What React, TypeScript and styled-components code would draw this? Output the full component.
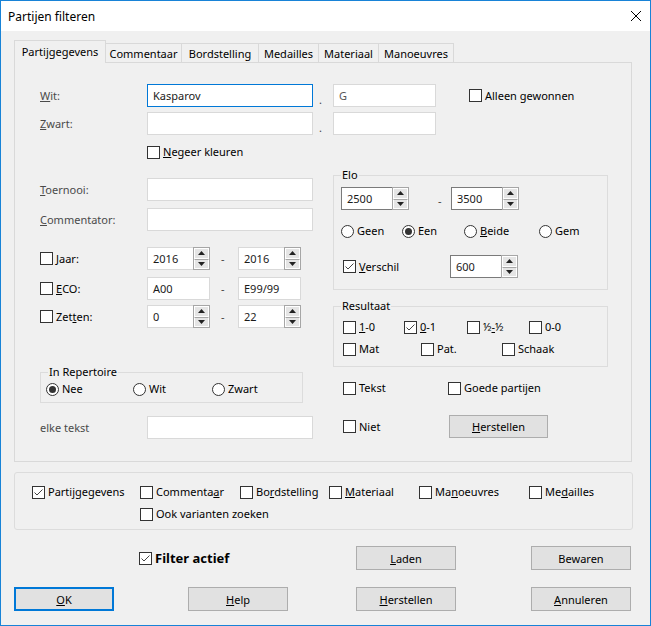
import React from "react";
import styled, { createGlobalStyle } from "styled-components";

const GlobalStyle = createGlobalStyle`
  html, body { margin: 0; padding: 0; background: #fff; }
  body { font-family: "Noto Sans", sans-serif; font-size: 11px; color: #000; }
  * { box-sizing: border-box; }
`;

function Check({ on }: { on?: boolean }) {
  return (
    <Box>
      {on && (
        <svg width="11" height="11" viewBox="0 0 11 11">
          <path d="M1.5 5.5 L4 8 L9.5 2.5" fill="none" stroke="#444" strokeWidth="1" />
        </svg>
      )}
    </Box>
  );
}

function CheckItem({ on, w, ml, children }: { on?: boolean; w?: number; ml?: number; children: React.ReactNode }) {
  return (
    <Item $w={w} $ml={ml}>
      <Check on={on} />
      <span>{children}</span>
    </Item>
  );
}

function RadioItem({ on, w, children }: { on?: boolean; w?: number; children: React.ReactNode }) {
  return (
    <Item $w={w}>
      <Circle>{on && <Dot />}</Circle>
      <span>{children}</span>
    </Item>
  );
}

function Arrow({ up }: { up?: boolean }) {
  return (
    <svg width="7" height="4" viewBox="0 0 7 4">
      <path d={up ? "M0 4 L3.5 0 L7 4 Z" : "M0 0 L7 0 L3.5 4 Z"} fill="#222" />
    </svg>
  );
}

function Spinner({ w, dark, value }: { w: number; dark?: boolean; value: string }) {
  return (
    <SpinFrame $w={w} $dark={dark}>
      <SpinText>{value}</SpinText>
      <SpinCol>
        <SpinBtn>
          <Arrow up />
        </SpinBtn>
        <SpinBtn>
          <Arrow />
        </SpinBtn>
      </SpinCol>
    </SpinFrame>
  );
}

export default function App() {
  return (
    <>
      <GlobalStyle />
      <Window>
        <TitleBar>
          <Title>Partijen filteren</Title>
          <svg width="10" height="10" viewBox="0 0 10 10" style={{ marginRight: 9 }}>
            <path d="M0 0 L10 10 M10 0 L0 10" stroke="#000" strokeWidth="1" />
          </svg>
        </TitleBar>

        <TabStrip>
          <Tab $w={92} $active>Partijgegevens</Tab>
          <Tab $w={77}>Commentaar</Tab>
          <Tab $w={78}>Bordstelling</Tab>
          <Tab $w={61}>Medailles</Tab>
          <Tab $w={61}>Materiaal</Tab>
          <Tab $w={76}>Manoeuvres</Tab>
        </TabStrip>

        <Panel>
          <Row>
            <Label $muted>
              <u>W</u>it:
            </Label>
            <TextBox $w={166} $focus>Kasparov</TextBox>
            <Sep>.</Sep>
            <TextBox $w={103} $color="#555">G</TextBox>
            <CheckItem ml={33}>Alleen gewonnen</CheckItem>
          </Row>
          <Row $mt={5}>
            <Label $muted>
              <u>Z</u>wart:
            </Label>
            <TextBox $w={166} />
            <Sep>.</Sep>
            <TextBox $w={103} />
          </Row>
          <Row $mt={10} $pl={107}>
            <CheckItem>
              <u>N</u>egeer kleuren
            </CheckItem>
          </Row>

          <Columns>
            <LeftCol>
              <Row>
                <Label $muted>
                  <u>T</u>oernooi:
                </Label>
                <TextBox $w={166} />
              </Row>
              <Row $mt={7}>
                <Label $muted>
                  <u>C</u>ommentator:
                </Label>
                <TextBox $w={166} />
              </Row>
              <Row $mt={16}>
                <CheckItem w={107}>
                  <u>J</u>aar:
                </CheckItem>
                <Spinner w={63} value="2016" />
                <Dash $w={28} $pl={11}>-</Dash>
                <Spinner w={63} value="2016" />
              </Row>
              <Row $mt={7}>
                <CheckItem w={107}>
                  <u>E</u>CO:
                </CheckItem>
                <TextBox $w={63}>A00</TextBox>
                <Dash $w={28} $pl={11}>-</Dash>
                <TextBox $w={63}>E99/99</TextBox>
              </Row>
              <Row $mt={5}>
                <CheckItem w={107}>
                  Zet<u>t</u>en:
                </CheckItem>
                <Spinner w={63} value="0" />
                <Dash $w={28} $pl={11}>-</Dash>
                <Spinner w={63} value="22" />
              </Row>

              <Group $w={263} $mt={37} $pb={6}>
                <Legend>In Repertoire</Legend>
                <Row $mt={3} $pl={5}>
                  <RadioItem on w={87}>Nee</RadioItem>
                  <RadioItem w={79}>Wit</RadioItem>
                  <RadioItem>Zwart</RadioItem>
                </Row>
              </Group>

              <Row $mt={13}>
                <Label $muted>elke tekst</Label>
                <TextBox $w={166} />
              </Row>
            </LeftCol>

            <RightCol>
              <Group $w={275} $pb={11}>
                <Legend>Elo</Legend>
                <Row $mt={5} $pl={7}>
                  <Spinner w={68} dark value="2500" />
                  <Dash $w={42} $pl={29} $low>-</Dash>
                  <Spinner w={68} dark value="3500" />
                </Row>
                <Row $mt={14} $pl={7}>
                  <RadioItem w={61}>Geen</RadioItem>
                  <RadioItem on w={62}>Een</RadioItem>
                  <RadioItem w={75}>
                    <u>B</u>eide
                  </RadioItem>
                  <RadioItem>Gem</RadioItem>
                </Row>
                <Row $mt={17} $pl={9}>
                  <CheckItem on w={107}>
                    <u>V</u>erschil
                  </CheckItem>
                  <Spinner w={68} dark value="600" />
                </Row>
              </Group>

              <Group $w={275} $mt={9} $pb={10}>
                <Legend>Resultaat</Legend>
                <Row $mt={7} $pl={9}>
                  <CheckItem w={61}>
                    <u>1</u>-0
                  </CheckItem>
                  <CheckItem on w={63}>
                    <u>0</u>-1
                  </CheckItem>
                  <CheckItem w={62}>
                    ½<u>-</u>½
                  </CheckItem>
                  <CheckItem>0-0</CheckItem>
                </Row>
                <Row $mt={8} $pl={9}>
                  <CheckItem w={78}>Mat</CheckItem>
                  <CheckItem w={81}>Pat.</CheckItem>
                  <CheckItem>Schaak</CheckItem>
                </Row>
              </Group>

              <Row $mt={14} $pl={10}>
                <CheckItem w={105}>Tekst</CheckItem>
                <CheckItem>Goede partijen</CheckItem>
              </Row>
              <Row $mt={20} $pl={10}>
                <CheckItem w={106}>Niet</CheckItem>
                <Button $w={99} $h={23}>
                  <u>H</u>erstellen
                </Button>
              </Row>
            </RightCol>
          </Columns>
        </Panel>

        <SearchGroup>
          <Row>
            <CheckItem on w={108}>Partijgegevens</CheckItem>
            <CheckItem w={100}>
              Commenta<u>a</u>r
            </CheckItem>
            <CheckItem w={89}>
              Bo<u>r</u>dstelling
            </CheckItem>
            <CheckItem w={90}>
              <u>M</u>ateriaal
            </CheckItem>
            <CheckItem w={110}>
              Ma<u>n</u>oeuvres
            </CheckItem>
            <CheckItem>
              Me<u>d</u>ailles
            </CheckItem>
          </Row>
          <Row $mt={8} $pl={108}>
            <CheckItem>Ook varianten zoeken</CheckItem>
          </Row>
        </SearchGroup>

        <Footer $mt={16}>
          <FilterCell>
            <CheckItem on>
              <Bold>Filter actief</Bold>
            </CheckItem>
          </FilterCell>
          <Button>
            <u>L</u>aden
          </Button>
          <Button>Bewaren</Button>
        </Footer>
        <Footer $mt={17}>
          <Button $focus>
            <u>O</u>K
          </Button>
          <Button>
            <u>H</u>elp
          </Button>
          <Button>
            <u>H</u>erstellen
          </Button>
          <Button>
            <u>A</u>nnuleren
          </Button>
        </Footer>
      </Window>
    </>
  );
}

const Window = styled.div`
  width: 651px;
  height: 626px;
  border: 1px solid #1883d7;
  background: #f0f0f0;
  display: flex;
  flex-direction: column;
  overflow: hidden;
`;

const TitleBar = styled.div`
  height: 30px;
  flex-shrink: 0;
  background: #fff;
  display: flex;
  align-items: center;
  padding-left: 7px;
`;

const Title = styled.span`
  flex: 1;
  font-size: 12px;
`;

const TabStrip = styled.div`
  display: flex;
  align-items: flex-end;
  height: 22px;
  margin: 9px 0 0 13px;
  position: relative;
  z-index: 1;
`;

const Tab = styled.div<{ $w: number; $active?: boolean }>`
  width: ${(p) => p.$w}px;
  height: ${(p) => (p.$active ? 23 : 19)}px;
  margin-bottom: ${(p) => (p.$active ? -1 : 0)}px;
  margin-left: -1px;
  border: 1px solid #d9d9d9;
  border-bottom: none;
  background: #f0f0f0;
  display: flex;
  align-items: center;
  justify-content: center;
  padding-bottom: ${(p) => (p.$active ? 2 : 0)}px;
  white-space: nowrap;

  &:first-child {
    margin-left: 0;
  }
`;

const Panel = styled.div`
  margin-left: 13px;
  width: 618px;
  height: 400px;
  flex-shrink: 0;
  border: 1px solid #d9d9d9;
  padding: 21px 0 0 25px;
`;

const Row = styled.div<{ $mt?: number; $pl?: number }>`
  display: flex;
  align-items: center;
  margin-top: ${(p) => p.$mt ?? 0}px;
  padding-left: ${(p) => p.$pl ?? 0}px;
`;

const Label = styled.span<{ $muted?: boolean }>`
  width: 107px;
  flex-shrink: 0;
  line-height: 14px;
  color: ${(p) => (p.$muted ? "#4a4a4a" : "#000")};
`;

const TextBox = styled.div<{ $w: number; $focus?: boolean; $color?: string }>`
  width: ${(p) => p.$w}px;
  height: 23px;
  flex-shrink: 0;
  background: #fff;
  border: 1px solid ${(p) => (p.$focus ? "#0078d7" : "#d9d9d9")};
  padding-left: 5px;
  display: flex;
  align-items: center;
  color: ${(p) => p.$color ?? "#1a1a1a"};
`;

const Sep = styled.span`
  width: 20px;
  flex-shrink: 0;
  padding: 8px 0 0 6px;
  color: #444;
`;

const Dash = styled.span<{ $w: number; $pl: number; $low?: boolean }>`
  width: ${(p) => p.$w}px;
  flex-shrink: 0;
  padding: ${(p) => (p.$low ? 4 : 0)}px 0 0 ${(p) => p.$pl}px;
  color: #444;
`;

const Item = styled.div<{ $w?: number; $ml?: number }>`
  display: flex;
  align-items: center;
  gap: 3px;
  width: ${(p) => (p.$w ? `${p.$w}px` : "auto")};
  margin-left: ${(p) => p.$ml ?? 0}px;
  flex-shrink: 0;
  line-height: 14px;
  white-space: nowrap;
`;

const Box = styled.span`
  width: 13px;
  height: 13px;
  flex-shrink: 0;
  border: 1px solid #333;
  background: #fff;
  display: flex;
  align-items: center;
  justify-content: center;
`;

const Circle = styled.span`
  width: 13px;
  height: 13px;
  flex-shrink: 0;
  border: 1px solid #333;
  border-radius: 50%;
  background: #fff;
  display: flex;
  align-items: center;
  justify-content: center;
`;

const Dot = styled.span`
  width: 7px;
  height: 7px;
  border-radius: 50%;
  background: #333;
`;

const SpinFrame = styled.div<{ $w: number; $dark?: boolean }>`
  width: ${(p) => p.$w}px;
  height: 23px;
  flex-shrink: 0;
  display: flex;
  background: #fff;
  border: 1px solid ${(p) => (p.$dark ? "#7a7a7a" : "#d9d9d9")};
`;

const SpinText = styled.div`
  flex: 1;
  padding-left: 5px;
  display: flex;
  align-items: center;
  color: #1a1a1a;
`;

const SpinCol = styled.div`
  width: 17px;
  display: flex;
  flex-direction: column;
  border: 1px solid #a6a6a6;
  margin: -1px -1px -1px 0;
`;

const SpinBtn = styled.div`
  flex: 1;
  background: #e5e5e5;
  border: 1px solid #fff;
  display: flex;
  align-items: center;
  justify-content: center;

  & + & {
    border-top: 1px solid #a6a6a6;
  }
`;

const Columns = styled.div`
  display: flex;
  margin-top: 9px;
`;

const LeftCol = styled.div`
  width: 293px;
  flex-shrink: 0;
  padding-top: 10px;
`;

const RightCol = styled.div`
  width: 275px;
  flex-shrink: 0;
`;

const Group = styled.fieldset<{ $w: number; $mt?: number; $pb?: number }>`
  width: ${(p) => p.$w}px;
  margin: ${(p) => p.$mt ?? 0}px 0 0 0;
  padding: 0 0 ${(p) => p.$pb ?? 0}px 0;
  border: 1px solid #dcdcdc;
  min-width: 0;
`;

const Legend = styled.legend`
  margin-left: 7px;
  padding: 0 1px;
  line-height: 14px;
`;

const Button = styled.div<{ $w?: number; $h?: number; $focus?: boolean }>`
  width: ${(p) => p.$w ?? 100}px;
  height: ${(p) => p.$h ?? 24}px;
  flex-shrink: 0;
  background: #e1e1e1;
  border: ${(p) => (p.$focus ? "2px solid #0078d7" : "1px solid #adadad")};
  display: flex;
  align-items: center;
  justify-content: center;
`;

const SearchGroup = styled.div`
  margin: 10px 0 0 13px;
  width: 619px;
  height: 58px;
  flex-shrink: 0;
  border: 1px solid #dcdcdc;
  border-radius: 3px;
  padding: 12px 0 0 17px;
`;

const Footer = styled.div<{ $mt: number }>`
  display: grid;
  grid-template-columns: 174px 168px 175px 100px;
  align-items: center;
  margin: ${(p) => p.$mt}px 0 0 13px;
`;

const FilterCell = styled.div`
  grid-column: 1 / 3;
  padding-left: 125px;
`;

const Bold = styled.span`
  font-weight: 700;
  font-size: 13px;
`;
